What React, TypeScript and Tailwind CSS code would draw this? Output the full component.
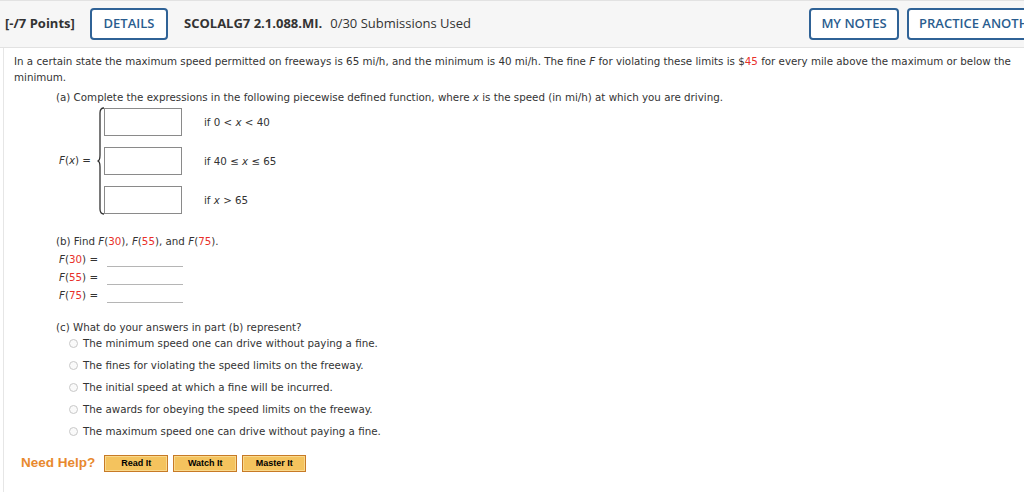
import React from 'react'

const verdana = { fontFamily: '"DejaVu Sans", Verdana, sans-serif' }

function Red({ children }: { children: React.ReactNode }) {
  return <span className="text-[#e8302a]">{children}</span>
}

function Fx({ n }: { n: string }) {
  return (
    <>
      <i>F</i>(<Red>{n}</Red>)
    </>
  )
}

const OPCIONES = [
  'The minimum speed one can drive without paying a fine.',
  'The fines for violating the speed limits on the freeway.',
  'The initial speed at which a fine will be incurred.',
  'The awards for obeying the speed limits on the freeway.',
  'The maximum speed one can drive without paying a fine.',
]

function HeaderButton({ children, className = '' }: { children: React.ReactNode; className?: string }) {
  return (
    <button
      className={`h-[32px] border-2 border-[#2f6296] rounded-[4px] bg-white text-[#2a5d8f] text-[13px] font-semibold px-[10px] whitespace-nowrap ${className}`}
    >
      {children}
    </button>
  )
}

function HelpButton({ label }: { label: string }) {
  return (
    <button
      className="w-[64px] h-[17px] bg-[#f4c35e] border border-[#c77a26] shadow-[inset_0_0_0_1px_#f9d98c] text-[9px] font-bold text-black leading-none"
      style={{ fontFamily: '"Liberation Sans", Arial, sans-serif' }}
    >
      {label}
    </button>
  )
}

export default function App() {
  return (
    <div className="w-[1024px] h-[492px] overflow-hidden bg-white">
      {/* cabecera */}
      <div
        className="h-[48px] bg-[#f6f6f6] border-t border-b border-[#e2e2e2] flex items-center pl-[5px] overflow-hidden"
        style={{ fontFamily: '"Open Sans", sans-serif' }}
      >
        <span className="text-[13px] font-bold text-[#333] w-[85px] shrink-0">[-/7 Points]</span>
        <HeaderButton className="w-[78px] shrink-0">DETAILS</HeaderButton>
        <span className="ml-[16px] text-[13px] font-bold text-[#333] whitespace-nowrap">SCOLALG7 2.1.088.MI.</span>
        <span className="ml-[8px] text-[13px] text-[#333] whitespace-nowrap">0/30 Submissions Used</span>
        <div className="flex-1" />
        <HeaderButton className="w-[90px] shrink-0">MY NOTES</HeaderButton>
        <HeaderButton className="ml-[8px] w-[134px] shrink-0 -mr-[17px] text-left">PRACTICE ANOTHER</HeaderButton>
      </div>

      {/* cuerpo */}
      <div className="ml-[3px] border-l border-[#e6e6e6] h-[444px] pl-[10px] pt-[5px] text-[10.3px] text-[#333]" style={verdana}>
        <p className="leading-[16px] pr-[6px]">
          In a certain state the maximum speed permitted on freeways is 65 mi/h, and the minimum is 40 mi/h. The fine{' '}
          <i>F</i> for violating these limits is $<Red>45</Red> for every mile above the maximum or below the minimum.
        </p>

        <div className="ml-[42px]">
          <p className="mt-[5px] leading-[14px]">
            (a) Complete the expressions in the following piecewise defined function, where <i>x</i> is the speed (in mi/h) at which you are driving.
          </p>

          {/* función a trozos */}
          <div className="flex items-center mt-[3px] ml-[3px]">
            <span className="w-[38px]">
              <i>F</i>(<i>x</i>) =
            </span>
            <svg width="8" height="108" viewBox="0 0 8 108" className="shrink-0">
              <path
                d="M7 1 Q3 1 3 6 L3 48 Q3 54 0.5 54 Q3 54 3 60 L3 102 Q3 107 7 107"
                fill="none"
                stroke="#333"
                strokeWidth="1.3"
              />
            </svg>
            <div className="flex flex-col gap-[11px] ml-[-1px]">
              {[0, 1, 2].map((i) => (
                <div key={i} className="flex items-center">
                  <div className="w-[78px] h-[28px] border border-[#8a8a8a]" />
                  <span className="ml-[22px] mt-[2px]">
                    {i === 0 && (
                      <>
                        if 0 &lt; <i>x</i> &lt; 40
                      </>
                    )}
                    {i === 1 && (
                      <>
                        if 40 ≤ <i>x</i> ≤ 65
                      </>
                    )}
                    {i === 2 && (
                      <>
                        if <i>x</i> &gt; 65
                      </>
                    )}
                  </span>
                </div>
              ))}
            </div>
          </div>

          <p className="mt-[19px] leading-[14px]">
            (b) Find <Fx n="30" />, <Fx n="55" />, and <Fx n="75" />.
          </p>
          <div className="flex flex-col ml-[3px]">
            {['30', '55', '75'].map((n) => (
              <div key={n} className="flex items-end h-[18px]">
                <span className="w-[48px] leading-[14px]">
                  <Fx n={n} /> =
                </span>
                <div className="w-[76px] h-[14px] border-b border-[#b5b5b5] mb-[-1px]" />
              </div>
            ))}
          </div>

          <p className="mt-[18px] leading-[14px]">(c) What do your answers in part (b) represent?</p>
          <div className="ml-[13px] flex flex-col gap-[8px] mt-[2px]">
            {OPCIONES.map((o) => (
              <label key={o} className="flex items-center leading-[14px]">
                <span className="w-[9px] h-[9px] rounded-full border border-[#c8c8c8] bg-[#fafafa] mr-[5px] shrink-0" />
                {o}
              </label>
            ))}
          </div>
        </div>

        <div className="flex items-center mt-[15px] ml-[7px]" style={{ fontFamily: '"Liberation Sans", Arial, sans-serif' }}>
          <span className="text-[13.5px] font-bold text-[#e8892e] mr-[9px]">Need Help?</span>
          <div className="flex gap-[5px]">
            <HelpButton label="Read It" />
            <HelpButton label="Watch It" />
            <HelpButton label="Master It" />
          </div>
        </div>
      </div>
    </div>
  )
}
